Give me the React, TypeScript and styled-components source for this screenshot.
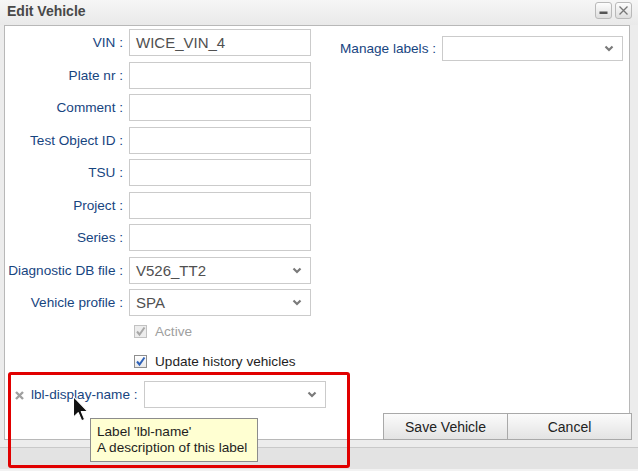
import React from 'react';
import styled, { createGlobalStyle, css } from 'styled-components';

const GlobalStyle = createGlobalStyle`
  html, body {
    margin: 0;
    padding: 0;
    background: #ececec;
  }
  body {
    font-family: "Liberation Sans", Arial, sans-serif;
  }
`;

const Window = styled.div`
  position: relative;
  width: 638px;
  height: 471px;
  background: #ececec;
  display: flex;
  flex-direction: column;
  overflow: hidden;
`;

const TitleBar = styled.div`
  height: 25px;
  display: flex;
  align-items: center;
  padding: 0 6px 0 7px;
  background: linear-gradient(#f6f6f6, #e9e9e9);
  box-sizing: border-box;
`;

const Title = styled.div`
  font-size: 14px;
  font-weight: 700;
  color: #484848;
  margin-top: -3px;
`;

const TitleButtons = styled.div`
  margin-left: auto;
  display: flex;
  gap: 3px;
  margin-top: -4px;
`;

const TitleButton = styled.div`
  width: 17px;
  height: 17px;
  box-sizing: border-box;
  border: 1px solid #b9b9b9;
  border-radius: 3px;
  background: linear-gradient(#fdfdfd, #dedede);
  display: flex;
  align-items: center;
  justify-content: center;
`;

const Body = styled.div`
  padding: 0 8px 0 4px;
`;

const Panel = styled.div`
  height: 415px;
  box-sizing: border-box;
  background: #fff;
  border: 1px solid #b8b8b8;
  display: flex;
  flex-direction: column;
`;

const Content = styled.div`
  display: flex;
`;

const LeftColumn = styled.div`
  width: 306px;
  flex-shrink: 0;
  padding-top: 3px;
  display: flex;
  flex-direction: column;
`;

const FieldGrid = styled.div`
  display: grid;
  grid-template-columns: 118px 182px;
  column-gap: 6px;
  row-gap: 5.5px;
`;

const Label = styled.label`
  font-size: 13.6px;
  color: #17457f;
  text-align: right;
  white-space: nowrap;
  align-self: center;
`;

const fieldBox = css`
  height: 27px;
  box-sizing: border-box;
  border: 1px solid #cbcbcb;
  background: #fff;
  display: flex;
  align-items: center;
  padding: 0 8px 0 6px;
  font-size: 15px;
  color: #505050;
`;

const TextInput = styled.div`
  ${fieldBox}
`;

const SelectBox = styled.div<{ $width?: number; $height?: number }>`
  ${fieldBox}
  flex-shrink: 0;
  width: ${(p) => p.$width ?? 182}px;
  height: ${(p) => p.$height ?? 27}px;
  justify-content: space-between;
`;

const CheckRow = styled.div<{ $top?: number; $muted?: boolean }>`
  grid-column: 2;
  height: 20px;
  margin-top: ${(p) => p.$top ?? 0}px;
  display: flex;
  align-items: center;
  gap: 8px;
  padding-left: 5px;
  font-size: 13.6px;
  color: ${(p) => (p.$muted ? '#a0a0a0' : '#1e1e1e')};
`;

const CheckBox = styled.span<{ $muted?: boolean }>`
  width: 13px;
  height: 13px;
  box-sizing: border-box;
  border: 1px solid ${(p) => (p.$muted ? '#c2c2c2' : '#8e8e8e')};
  background: ${(p) => (p.$muted ? '#ededed' : 'linear-gradient(#fff, #e8e8e8)')};
  display: flex;
  align-items: center;
  justify-content: center;
`;

const LabelRow = styled.div`
  display: flex;
  align-items: center;
  margin-top: 9.5px;
  padding-left: 10px;
`;

const RemoveIcon = styled.span`
  display: flex;
  width: 9px;
  margin-right: 7px;
  margin-top: 1px;
`;

const RowLabel = styled(Label)`
  margin-right: 6px;
`;

const RightColumn = styled.div`
  flex: 1;
  display: flex;
  justify-content: flex-end;
  align-items: flex-start;
  padding: 10px 6px 0 0;
  gap: 6px;
`;

const ManageLabel = styled(Label)`
  align-self: auto;
  margin-top: 5px;
`;

const ButtonBar = styled.div`
  margin-top: auto;
  display: flex;
  justify-content: flex-end;
  margin-right: -3px;
  margin-bottom: -1px;
`;

const Button = styled.button`
  width: 125px;
  height: 27px;
  box-sizing: border-box;
  border: 1px solid #a9a9a9;
  margin-left: -1px;
  background: linear-gradient(#fbfbfb, #e3e3e3);
  font-family: "Liberation Sans", Arial, sans-serif;
  font-size: 14px;
  color: #222;
  padding: 0;
`;

const Gap = styled.div`
  height: 7px;
`;

const StatusBar = styled.div`
  flex: 1;
  border-top: 1px solid #c9c9c9;
  border-bottom: 2px solid #f2f2f2;
  background: #e3e3e3;
`;

const Highlight = styled.div`
  position: absolute;
  left: 8px;
  top: 372px;
  width: 342px;
  height: 96px;
  box-sizing: border-box;
  border: 3px solid #e10000;
  border-radius: 3px;
  pointer-events: none;
`;

const Tooltip = styled.div`
  position: absolute;
  left: 90px;
  top: 418px;
  width: 168px;
  height: 44px;
  box-sizing: border-box;
  border: 1px solid #8c8c8c;
  background: #ffffd2;
  padding: 5px 6px;
  font-size: 13.6px;
  line-height: 15.5px;
  color: #1e1e1e;
`;

const Cursor = styled.svg`
  position: absolute;
  left: 72px;
  top: 396px;
`;

const Chevron = () => (
  <svg width="10" height="7" viewBox="0 0 10 7">
    <polyline points="1.5,1.5 5,5 8.5,1.5" fill="none" stroke="#7a7a7a" strokeWidth="2.2" />
  </svg>
);

const Check = ({ color }: { color: string }) => (
  <svg width="11" height="11" viewBox="0 0 11 11">
    <polyline points="2,5.5 4.5,8.5 9.5,1.5" fill="none" stroke={color} strokeWidth="2" />
  </svg>
);

const fields: { label: string; value?: string; select?: boolean }[] = [
  { label: 'VIN :', value: 'WICE_VIN_4' },
  { label: 'Plate nr :' },
  { label: 'Comment :' },
  { label: 'Test Object ID :' },
  { label: 'TSU :' },
  { label: 'Project :' },
  { label: 'Series :' },
  { label: 'Diagnostic DB file :', value: 'V526_TT2', select: true },
  { label: 'Vehicle profile :', value: 'SPA', select: true },
];

const App: React.FC = () => {
  return (
    <>
      <GlobalStyle />
      <Window>
        <TitleBar>
          <Title>Edit Vehicle</Title>
          <TitleButtons>
            <TitleButton>
              <svg width="11" height="11" viewBox="0 0 11 11">
                <rect x="1.5" y="6.5" width="8" height="2.5" fill="#555" />
              </svg>
            </TitleButton>
            <TitleButton>
              <svg width="11" height="11" viewBox="0 0 11 11">
                <path d="M1.5 1.5 L9.5 9.5 M9.5 1.5 L1.5 9.5" stroke="#777" strokeWidth="1.3" />
              </svg>
            </TitleButton>
          </TitleButtons>
        </TitleBar>

        <Body>
          <Panel>
            <Content>
              <LeftColumn>
                <FieldGrid>
                  {fields.map((f) => (
                    <React.Fragment key={f.label}>
                      <Label>{f.label}</Label>
                      {f.select ? (
                        <SelectBox>
                          <span>{f.value}</span>
                          <Chevron />
                        </SelectBox>
                      ) : (
                        <TextInput>{f.value}</TextInput>
                      )}
                    </React.Fragment>
                  ))}
                  <CheckRow $muted>
                    <CheckBox $muted>
                      <Check color="#a8a8a8" />
                    </CheckBox>
                    Active
                  </CheckRow>
                  <CheckRow $top={4.5}>
                    <CheckBox>
                      <Check color="#2f62b8" />
                    </CheckBox>
                    Update history vehicles
                  </CheckRow>
                </FieldGrid>

                <LabelRow>
                  <RemoveIcon>
                    <svg width="9" height="9" viewBox="0 0 9 9">
                      <path d="M1 1 L8 8 M8 1 L1 8" stroke="#a0a0a0" strokeWidth="2.4" />
                    </svg>
                  </RemoveIcon>
                  <RowLabel>lbl-display-name :</RowLabel>
                  <SelectBox>
                    <span />
                    <Chevron />
                  </SelectBox>
                </LabelRow>
              </LeftColumn>

              <RightColumn>
                <ManageLabel>Manage labels :</ManageLabel>
                <SelectBox $width={181} $height={25}>
                  <span />
                  <Chevron />
                </SelectBox>
              </RightColumn>
            </Content>

            <ButtonBar>
              <Button>Save Vehicle</Button>
              <Button>Cancel</Button>
            </ButtonBar>
          </Panel>
        </Body>
        <Gap />
        <StatusBar />

        <Highlight />
        <Tooltip>
          Label 'lbl-name'
          <br />
          A description of this label
        </Tooltip>
        <Cursor width="18" height="26" viewBox="0 0 12 19">
          <path
            d="M0.5 0.5 L0.5 15.5 L4 12.2 L6.5 18 L8.6 17.1 L6.2 11.4 L11 11.4 Z"
            fill="#111"
            stroke="#fff"
            strokeWidth="0.8"
            strokeLinejoin="round"
          />
        </Cursor>
      </Window>
    </>
  );
};

export default App;
